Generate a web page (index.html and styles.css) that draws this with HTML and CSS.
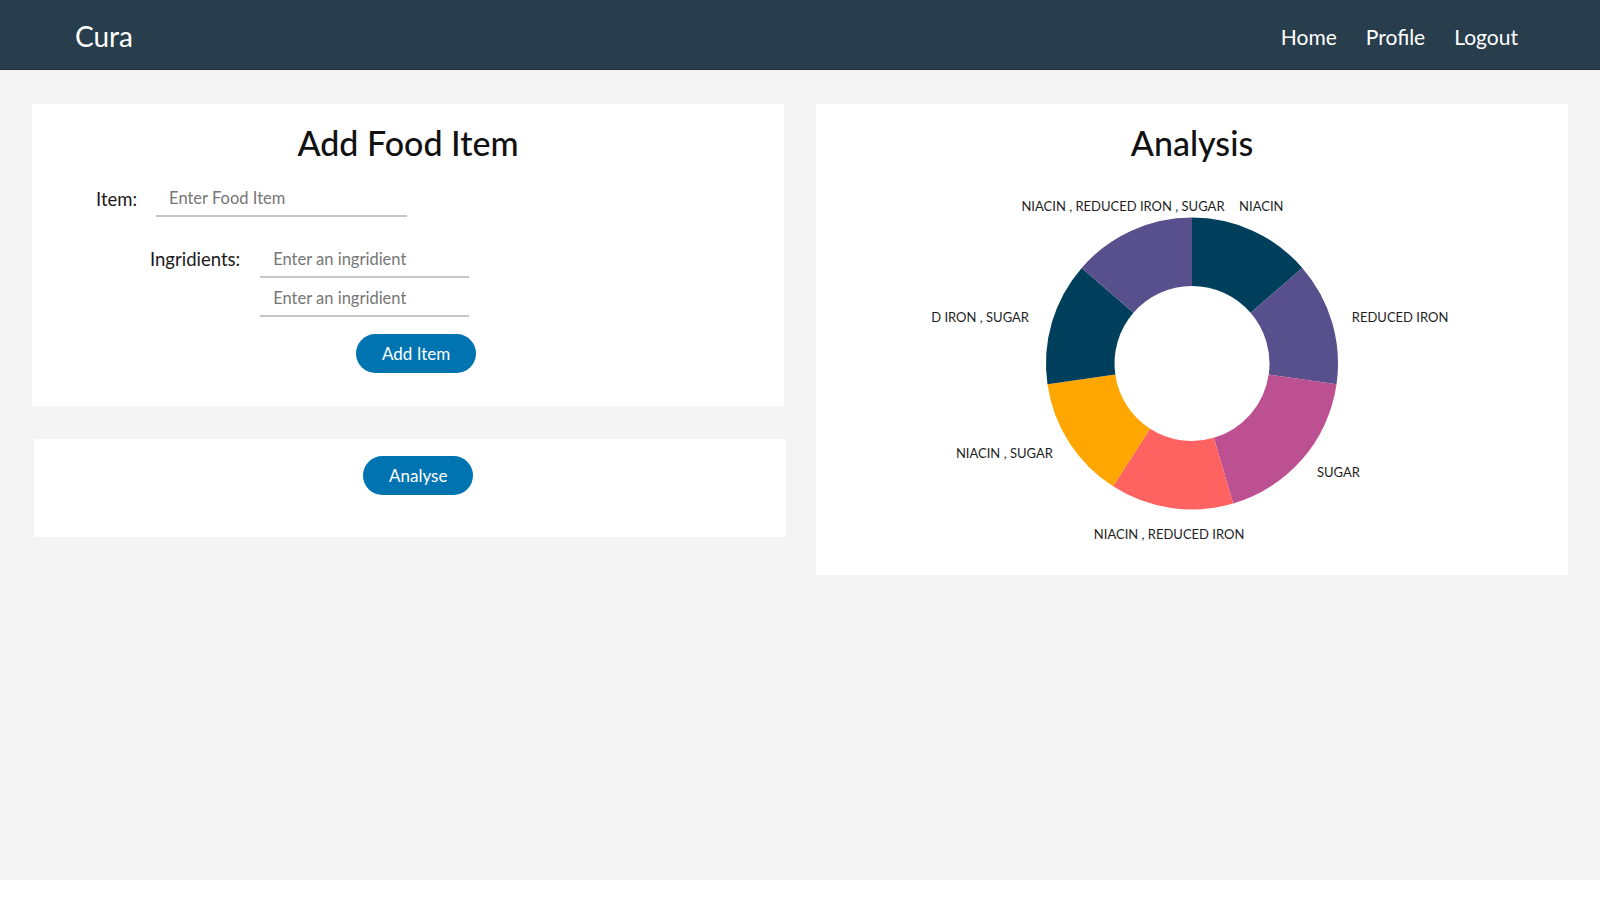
FILE: index.html
```html
<!DOCTYPE html>
<html lang="en">
<head>
<meta charset="utf-8">
<title>Cura</title>
<link rel="stylesheet" href="styles.css">
</head>
<body>
<nav class="navbar">
  <div class="brand">Cura</div>
  <ul class="nav-links">
    <li><a href="#">Home</a></li>
    <li><a href="#">Profile</a></li>
    <li><a href="#">Logout</a></li>
  </ul>
</nav>
<main class="page">
  <div class="col-left">
    <section class="card card-add">
      <h2 class="card-title">Add Food Item</h2>
      <div class="form-row row-item">
        <label class="field-label">Item:</label>
        <input class="field field-item" type="text" placeholder="Enter Food Item">
      </div>
      <div class="form-row row-ingredients">
        <label class="field-label">Ingridients:</label>
        <div class="ingredient-list">
          <input class="field field-ing" type="text" placeholder="Enter an ingridient">
          <input class="field field-ing" type="text" placeholder="Enter an ingridient">
        </div>
      </div>
      <div class="row-submit">
        <button class="btn" type="button">Add Item</button>
      </div>
    </section>
    <section class="card card-analyse">
      <button class="btn" type="button">Analyse</button>
    </section>
  </div>
  <section class="card card-analysis">
    <h2 class="card-title">Analysis</h2>
    <svg class="chart" width="520" height="370" viewBox="0 0 520 370">
      <g transform="translate(260 173.5)">
        <path fill="#003f5c" d="M0,-146 A146,146 0 0 1 110.33,-95.62 L58.57,-50.75 A77.5,77.5 0 0 0 0,-77.5 Z"/>
        <path fill="#58508d" d="M110.33,-95.62 A146,146 0 0 1 144.52,20.77 L76.71,11.03 A77.5,77.5 0 0 0 58.57,-50.75 Z"/>
        <path fill="#bc5090" d="M144.52,20.77 A146,146 0 0 1 41.13,140.09 L21.83,74.36 A77.5,77.5 0 0 0 76.71,11.03 Z"/>
        <path fill="#ff6361" d="M41.13,140.09 A146,146 0 0 1 -78.94,122.82 L-41.9,65.2 A77.5,77.5 0 0 0 21.83,74.36 Z"/>
        <path fill="#ffa600" d="M-78.94,122.82 A146,146 0 0 1 -144.52,20.77 L-76.71,11.03 A77.5,77.5 0 0 0 -41.9,65.2 Z"/>
        <path fill="#003f5c" d="M-144.52,20.77 A146,146 0 0 1 -110.33,-95.62 L-58.57,-50.75 A77.5,77.5 0 0 0 -76.71,11.03 Z"/>
        <path fill="#58508d" d="M-110.33,-95.62 A146,146 0 0 1 0,-146 L0,-77.5 A77.5,77.5 0 0 0 -58.57,-50.75 Z"/>
      </g>
      <g class="chart-labels">
        <text x="191" y="20.7" text-anchor="middle">NIACIN , REDUCED IRON , SUGAR</text>
        <text x="329.3" y="20.7" text-anchor="middle">NIACIN</text>
        <text x="419.8" y="131.7" text-anchor="start">REDUCED IRON</text>
        <text x="385" y="286.7" text-anchor="start">SUGAR</text>
        <text x="237.1" y="349" text-anchor="middle">NIACIN , REDUCED IRON</text>
        <text x="120.9" y="268.3" text-anchor="end">NIACIN , SUGAR</text>
        <text x="97" y="131.7" text-anchor="end">REDUCED IRON , SUGAR</text>
      </g>
    </svg>
  </section>
</main>
</body>
</html>
```
FILE: styles.css
```css
* {
  box-sizing: border-box;
}

body {
  margin: 0;
  background: #ffffff;
  font-family: Lato, "Open Sans", sans-serif;
}

.navbar {
  height: 70px;
  background: #283e4c;
  border-bottom: 1px solid #1f313d;
  display: flex;
  align-items: center;
  justify-content: space-between;
  padding: 5px 82px 0 75px;
}

.brand {
  color: #ffffff;
  font-size: 28px;
  line-height: 1.2;
}

.nav-links {
  display: flex;
  gap: 29px;
  list-style: none;
  margin: 0;
  padding: 0;
}

.nav-links a {
  color: #ffffff;
  text-decoration: none;
  font-size: 21px;
  line-height: 1.2;
}

.page {
  height: 810px;
  background: #f4f4f4;
  padding: 34px 32px 0;
  display: grid;
  grid-template-columns: 752px 752px;
  column-gap: 32px;
  align-items: start;
}

.card {
  background: #ffffff;
}

.card-title {
  margin: 0;
  text-align: center;
  font-size: 34px;
  line-height: 42px;
  font-weight: 500;
  color: #111111;
}

.card-add {
  padding: 18px 0 33px;
}

.form-row {
  display: flex;
}

.field-label {
  font-size: 18.5px;
  line-height: 1.2;
  color: #1a1a1a;
}

.row-item {
  margin-top: 17px;
  padding-left: 64px;
  align-items: center;
  gap: 19px;
}

.row-ingredients {
  margin-top: 25px;
  padding-left: 118px;
  align-items: flex-start;
  gap: 20px;
}

.row-ingredients .field-label {
  line-height: 34px;
}

.ingredient-list {
  display: flex;
  flex-direction: column;
  gap: 3px;
}

.field {
  height: 36px;
  border: 0;
  border-bottom: 2px solid #c6c6c6;
  padding: 0 13px;
  font-family: Lato, "Open Sans", sans-serif;
  font-size: 16.5px;
  color: #333333;
  background: transparent;
  outline: none;
}

.field::placeholder {
  color: #767676;
}

.field-item {
  width: 251px;
}

.field-ing {
  width: 209px;
}

.row-submit {
  margin-top: 17px;
  padding-left: 324px;
  display: flex;
}

.btn {
  height: 39px;
  padding: 0 26px;
  border: 0;
  border-radius: 20px;
  background: #0073b1;
  color: #ffffff;
  font-family: Lato, "Open Sans", sans-serif;
  font-size: 17px;
  cursor: pointer;
}

.card-analyse {
  margin-top: 33px;
  margin-left: 2px;
  margin-right: -2px;
  padding: 17px 0 42px 329px;
  display: flex;
}

.card-analysis {
  padding: 18px 0 15px;
  display: flex;
  flex-direction: column;
  align-items: center;
}

.chart {
  display: block;
  margin-top: 26px;
  overflow: hidden;
}

.chart-labels text {
  font-family: Lato, "Open Sans", sans-serif;
  font-size: 13px;
  fill: #1e1e1e;
}
```
